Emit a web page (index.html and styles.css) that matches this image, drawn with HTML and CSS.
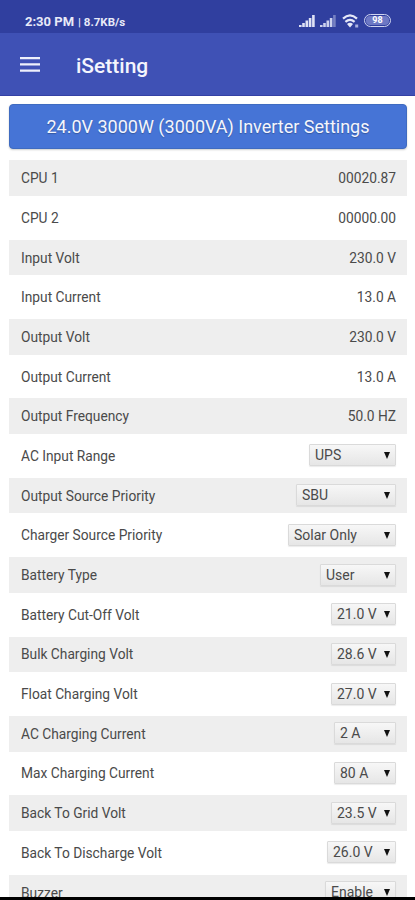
FILE: index.html
```
<!DOCTYPE html>
<html lang="en">
<head>
    <meta charset="UTF-8">
    <meta name="viewport" content="width=device-width, initial-scale=1.0">
    <title>iSetting</title>
    <link rel="stylesheet" href="styles.css">
</head>
<body>
<div class="screen">
    <div class="status-bar">
        <div class="status-left"><span class="clock">2:30 PM</span><span class="speed">| 8.7KB/s</span></div>
        <div class="status-icons">
            <svg width="16" height="13" viewBox="0 0 16 13" fill="#dfe2f5">
                <path d="M0 11h2.6v2H0zM3.2 9h2.6v4H3.2zM6.5 6.5h2.6V13H6.5zM9.8 4h2.6v9H9.8zM13.1 1h2.6v12h-2.6z"/>
            </svg>
            <svg width="16" height="13" viewBox="0 0 16 13" fill="#cdd2ee">
                <path d="M0 11h2.6v2H0zM3.2 9h2.6v4H3.2zM6.5 6.5h2.6V13H6.5zM9.8 4h2.6v9H9.8z"/>
                <path d="M13.1 1h2.6v12h-2.6z" opacity="0.45"/>
            </svg>
            <svg class="wifi" width="17" height="14" viewBox="0 0 17 14" fill="none" stroke="#e6e8f8" stroke-width="2.2">
                <path d="M1 4.6q7-6.4 14 0M3.4 7.8q4.6-4 9.2 0"/>
                <path d="M5 10q3-2.4 6 0l-3 3.4z" fill="#e6e8f8" stroke="none"/>
                <path d="M13.2 10.5h3v3h-3z" fill="#aab1e0" stroke="none"/>
            </svg>
            <span class="battery"><span class="battery-level">98</span></span>
        </div>
    </div>
    <div class="header">
        <svg class="menu-icon" width="20" height="15" viewBox="0 0 20 15" fill="#eef0fc">
            <path d="M0 0h20v2.2H0zM0 6.3h20v2.2H0zM0 12.6h20v2.2H0z"/>
        </svg>
        <h1>iSetting</h1>
    </div>
    <div class="content">
        <div class="banner">24.0V 3000W (3000VA) Inverter Settings</div>
        <div class="settings">
            <div class="row"><label>CPU 1</label><span class="value">00020.87</span></div>
            <div class="row"><label>CPU 2</label><span class="value">00000.00</span></div>
            <div class="row"><label>Input Volt</label><span class="value">230.0 V</span></div>
            <div class="row"><label>Input Current</label><span class="value">13.0 A</span></div>
            <div class="row"><label>Output Volt</label><span class="value">230.0 V</span></div>
            <div class="row"><label>Output Current</label><span class="value">13.0 A</span></div>
            <div class="row"><label>Output Frequency</label><span class="value">50.0 HZ</span></div>
            <div class="row"><label>AC Input Range</label><div class="select w-range"><select><option>UPS</option></select></div></div>
            <div class="row"><label>Output Source Priority</label><div class="select w-output"><select><option>SBU</option></select></div></div>
            <div class="row"><label>Charger Source Priority</label><div class="select w-charger"><select><option>Solar Only</option></select></div></div>
            <div class="row"><label>Battery Type</label><div class="select w-type"><select><option>User</option></select></div></div>
            <div class="row"><label>Battery Cut-Off Volt</label><div class="select w-volt"><select><option>21.0 V</option></select></div></div>
            <div class="row"><label>Bulk Charging Volt</label><div class="select w-volt"><select><option>28.6 V</option></select></div></div>
            <div class="row"><label>Float Charging Volt</label><div class="select w-volt"><select><option>27.0 V</option></select></div></div>
            <div class="row"><label>AC Charging Current</label><div class="select w-amp"><select><option>2 A</option></select></div></div>
            <div class="row"><label>Max Charging Current</label><div class="select w-amp"><select><option>80 A</option></select></div></div>
            <div class="row"><label>Back To Grid Volt</label><div class="select w-volt"><select><option>23.5 V</option></select></div></div>
            <div class="row"><label>Back To Discharge Volt</label><div class="select w-discharge"><select><option>26.0 V</option></select></div></div>
            <div class="row"><label>Buzzer</label><div class="select w-buzzer"><select><option>Enable</option></select></div></div>
        </div>
    </div>
    <div class="bottom-edge"></div>
</div>
</body>
</html>
```
FILE: styles.css
```
* {
    box-sizing: border-box;
}
body {
    margin: 0;
    font-family: Roboto, sans-serif;
    background: #fff;
    color: #4a4a4a;
}
.screen {
    display: flex;
    flex-direction: column;
    height: 900px;
    overflow: hidden;
}
.status-bar {
    display: flex;
    flex: none;
    justify-content: space-between;
    align-items: center;
    height: 33px;
    padding: 8px 24px 0 25px;
    background: #303f9f;
    color: #e8eaf8;
}
.status-left {
    display: flex;
    align-items: baseline;
    gap: 4px;
    padding-top: 1px;
    font-weight: 700;
}
.clock {
    font-size: 13px;
}
.speed {
    font-size: 11.5px;
}
.status-icons {
    display: flex;
    align-items: center;
    gap: 5px;
}
.wifi {
    margin-left: 1px;
}
.battery {
    display: flex;
    width: 27px;
    height: 13px;
    padding: 1px;
    border: 1.5px solid #cfd4f0;
    border-radius: 7px;
}
.battery-level {
    flex: 1;
    border-radius: 4px;
    background: #6d78c4;
    color: #fff;
    font-size: 9px;
    font-weight: 700;
    line-height: 9px;
    text-align: center;
}
.header {
    display: flex;
    flex: none;
    align-items: center;
    height: 63px;
    padding: 1px 20px 0;
    background: #3f51b5;
    border-bottom: 1px solid #3441a5;
}
.header h1 {
    margin: 2px 0 0 36px;
    color: #f4f5fd;
    font-size: 21px;
    font-weight: 500;
    line-height: 28px;
}
.content {
    flex: 1;
    min-height: 0;
    overflow: hidden;
    padding: 8px 8px 0 9px;
}
.banner {
    height: 45px;
    border: 1px solid #3f6bc0;
    border-radius: 4px;
    background: #4674d6;
    box-shadow: 0 1px 2px rgba(0, 0, 0, 0.2);
    color: #f4f6fd;
    font-size: 18px;
    line-height: 43px;
    text-align: center;
    text-shadow: 0 1px 1px rgba(0, 0, 0, 0.25);
    white-space: nowrap;
}
.settings {
    display: flex;
    flex-direction: column;
    gap: 4px;
    margin-top: 11.3px;
}
.row {
    display: flex;
    flex: none;
    justify-content: space-between;
    align-items: center;
    height: 35.7px;
    padding: 0 11px 0 12px;
    font-size: 13.75px;
}
.row:nth-child(odd) {
    background: #eee;
}
.select {
    position: relative;
    height: 22px;
    margin-top: -1px;
}
.select select {
    display: block;
    width: 100%;
    height: 100%;
    padding: 0 0 0 5px;
    border: 1px solid #dadada;
    border-radius: 1px;
    appearance: none;
    background: linear-gradient(#f7f7f7, #e6e6e6);
    box-shadow: 0 1px 1px rgba(0, 0, 0, 0.08);
    color: #4a4a4a;
    font-family: inherit;
    font-size: 14px;
}
/* dropdown arrow */
.select::after {
    content: "";
    position: absolute;
    top: 8px;
    right: 6px;
    border: 3.5px solid transparent;
    border-top: 7px solid #111;
    border-bottom: 0;
    pointer-events: none;
}
.w-range {
    width: 87px;
}
.w-output {
    width: 100px;
}
.w-charger {
    width: 108px;
}
.w-type {
    width: 76px;
}
.w-volt {
    width: 65px;
}
.w-amp {
    width: 62px;
}
.w-discharge {
    width: 69px;
}
.w-buzzer {
    width: 71px;
}
.bottom-edge {
    flex: none;
    height: 3px;
    background: #000;
}
```
